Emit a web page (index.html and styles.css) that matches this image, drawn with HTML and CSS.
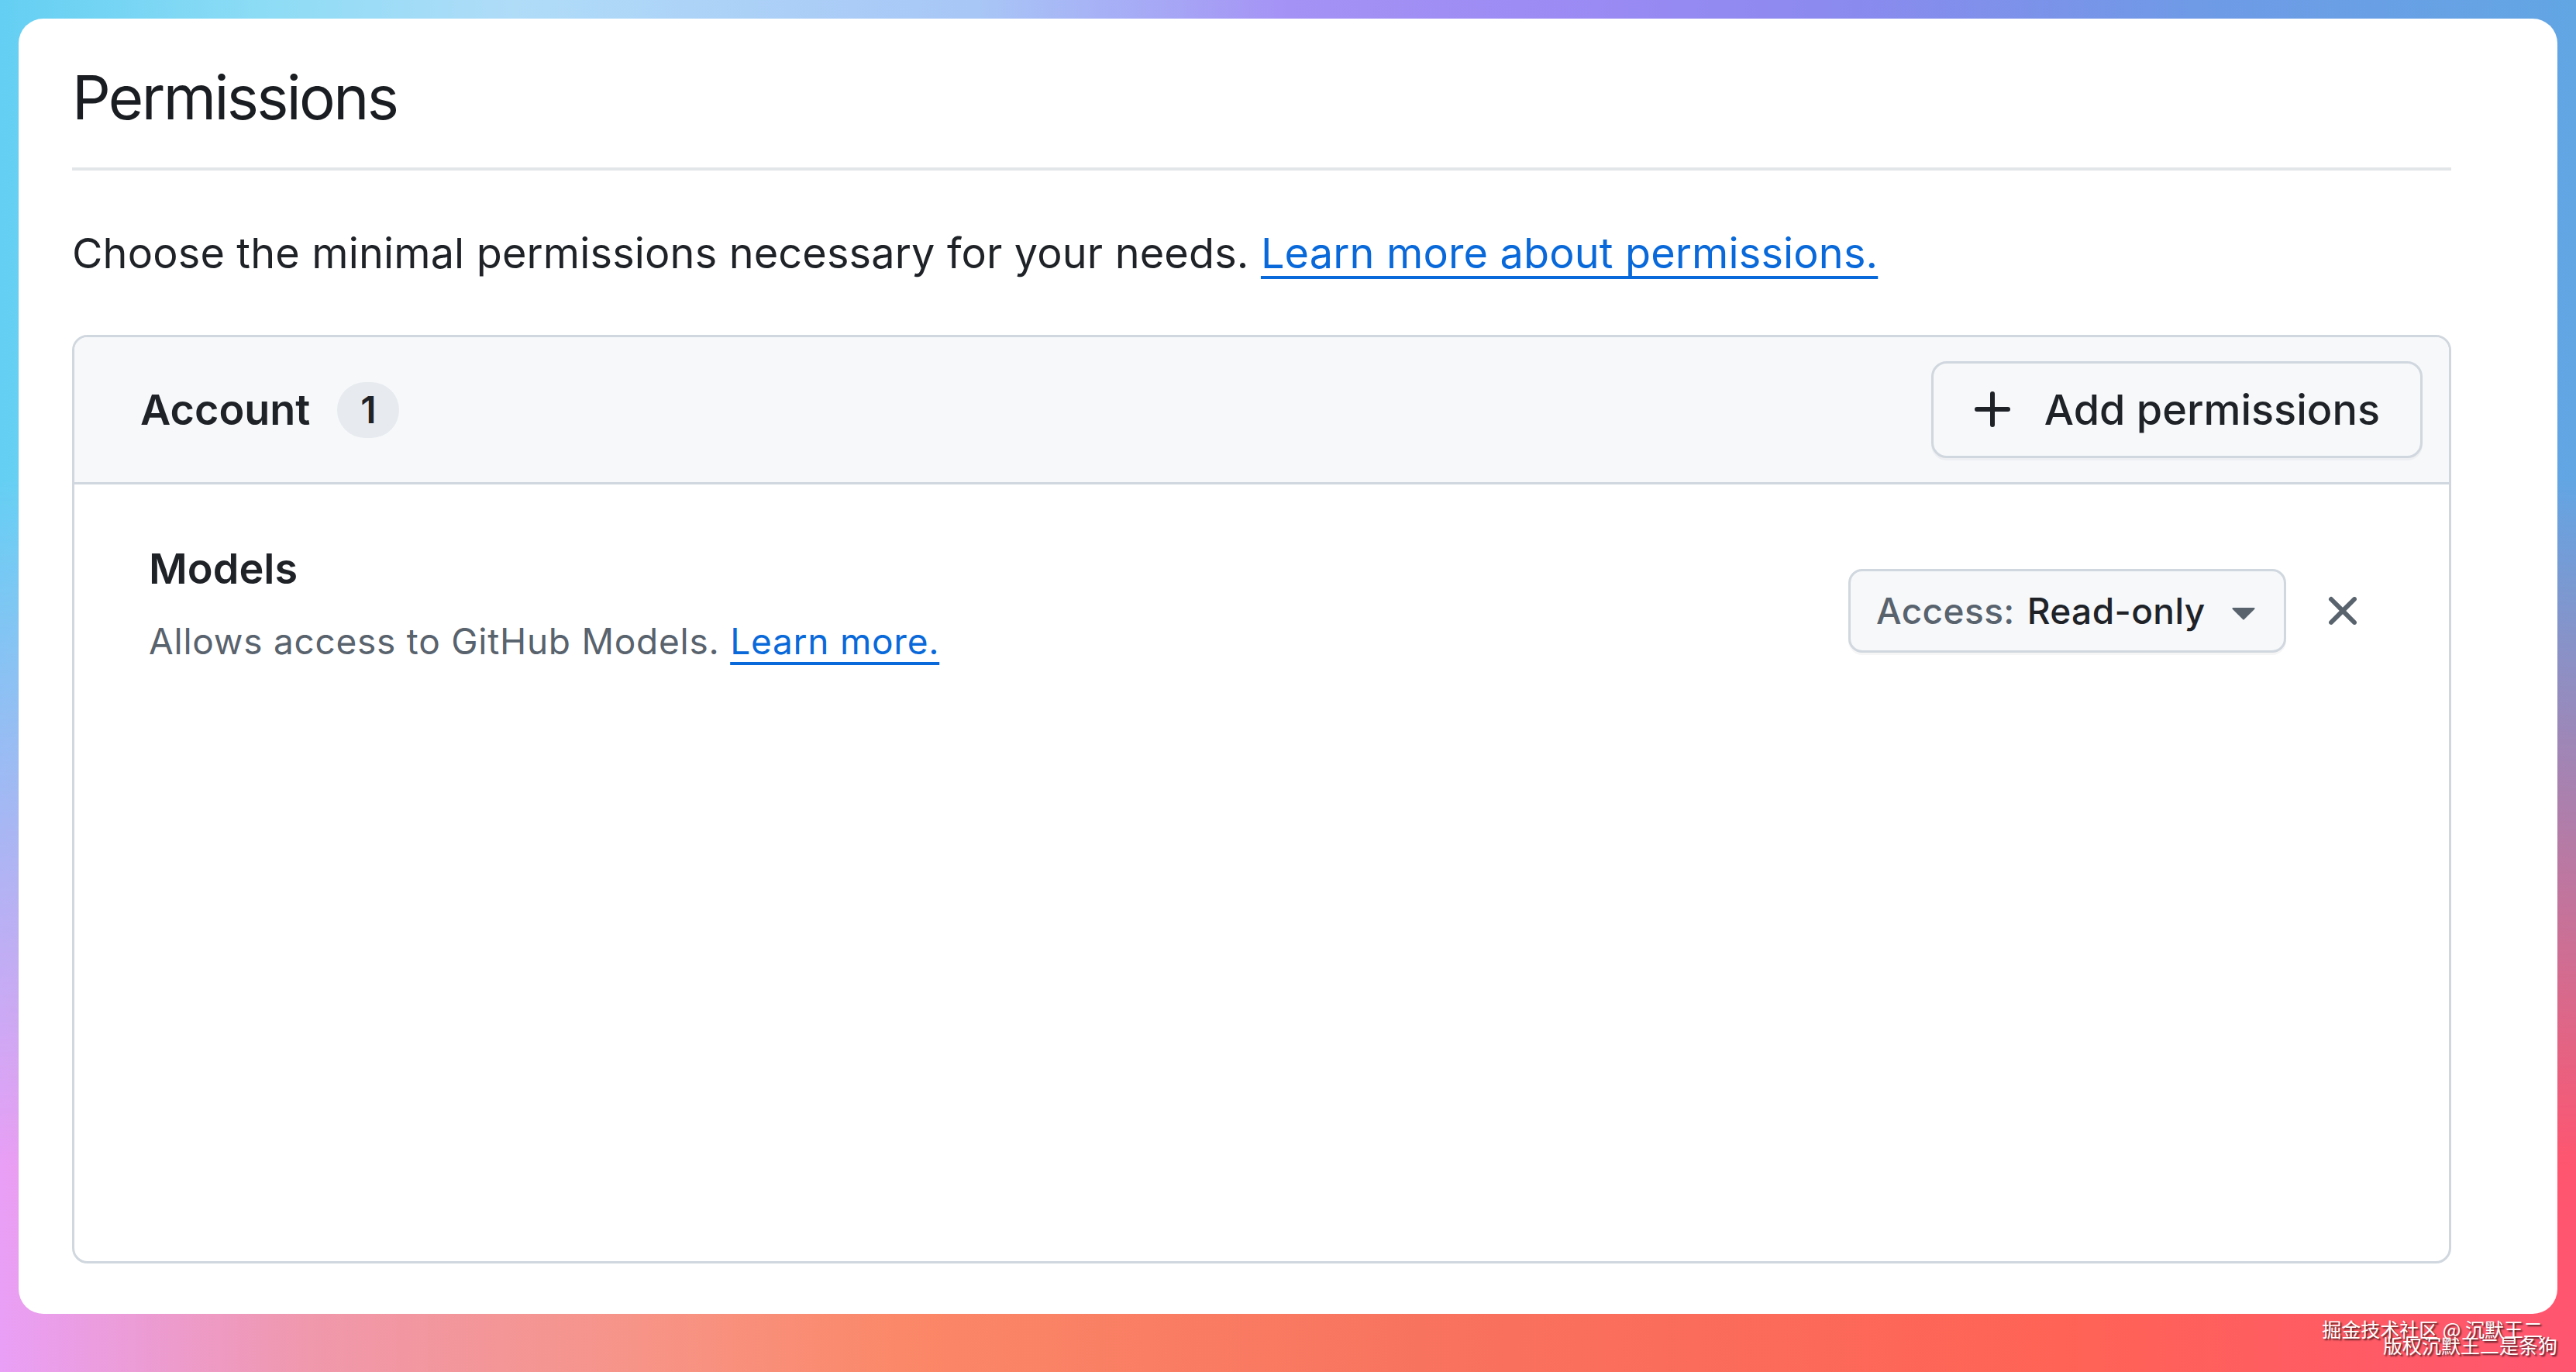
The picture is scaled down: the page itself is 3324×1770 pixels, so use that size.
FILE: index.html
```html
<!DOCTYPE html>
<html lang="en">
<head>
<meta charset="utf-8">
<title>Permissions</title>
<link rel="stylesheet" href="styles.css">
</head>
<body>
<main class="card">
  <h2 class="title">Permissions</h2>
  <p class="lead">Choose the minimal permissions necessary for your needs. <a class="link" href="#">Learn more about permissions.</a></p>

  <section class="box">
    <header class="box-header">
      <div class="box-title">
        <span>Account</span>
        <span class="counter">1</span>
      </div>
      <button class="btn" type="button">
        <svg class="btn-icon" viewBox="0 0 16 16" aria-hidden="true"><path d="M7.75 2a.75.75 0 0 1 .75.75V7h4.25a.75.75 0 0 1 0 1.5H8.5v4.25a.75.75 0 0 1-1.5 0V8.5H2.75a.75.75 0 0 1 0-1.5H7V2.75A.75.75 0 0 1 7.75 2Z"/></svg>
        <span>Add permissions</span>
      </button>
    </header>

    <div class="box-row">
      <div class="perm">
        <div class="perm-name">Models</div>
        <div class="perm-desc">Allows access to GitHub Models. <a class="link" href="#">Learn more.</a></div>
      </div>
      <div class="perm-actions">
        <button class="select" type="button">
          <span class="select-label">Access:</span>
          <span class="select-value">Read-only</span>
          <svg class="select-caret" viewBox="0 0 16 16" aria-hidden="true"><path d="m4.427 7.427 3.396 3.396a.25.25 0 0 0 .354 0l3.396-3.396A.25.25 0 0 0 11.396 7H4.604a.25.25 0 0 0-.177.427Z"/></svg>
        </button>
        <button class="remove" type="button" aria-label="Remove">
          <svg viewBox="0 0 16 16" aria-hidden="true"><path d="M3.72 3.72a.75.75 0 0 1 1.06 0L8 6.94l3.22-3.22a.749.749 0 0 1 1.275.326.749.749 0 0 1-.215.734L9.06 8l3.22 3.22a.749.749 0 0 1-.326 1.275.749.749 0 0 1-.734-.215L8 9.06l-3.22 3.22a.751.751 0 0 1-1.042-.018.751.751 0 0 1-.018-1.042L6.94 8 3.72 4.78a.75.75 0 0 1 0-1.06Z"/></svg>
        </button>
      </div>
    </div>
  </section>
</main>

<div class="watermark">
  <div class="wm-line wm-first">掘金技术社区 @ 沉默王二</div>
  <div class="wm-line">版权沉默王二是条狗</div>
</div>
</body>
</html>
```

FILE: styles.css
```css
* { box-sizing: border-box; }

html, body { height: 100%; }

body {
  margin: 0;
  padding: 24px 24px 75px 24px;
  position: relative;
  isolation: isolate;
  display: flex;
  flex-direction: column;
  font-family: Inter, "Noto Sans", sans-serif;
  color: #1f2328;
  background: linear-gradient(90deg, #e99ff6 0%, #f098ac 12%, #f79487 25%, #fb8868 35%, #f8735e 55%, #ff6355 80%, #ff5570 100%);
  overflow: hidden;
}

/* upper half of the backdrop: cyan to violet, fading down into the warm band */
body::before {
  content: "";
  position: absolute;
  inset: 0;
  z-index: -1;
  background: linear-gradient(90deg, #64cff3 0%, #8cdcf5 10%, #b0dcf8 20%, #a8c6f6 38%, #a592f5 50%, #9a8af3 62%, #8a8aee 72%, #6f9ae6 85%, #62a6e4 100%);
  -webkit-mask-image: linear-gradient(180deg, #000 0%, #000 35%, rgba(0,0,0,.6) 55%, transparent 85%);
  mask-image: linear-gradient(180deg, #000 0%, #000 35%, rgba(0,0,0,.6) 55%, transparent 85%);
}

.card {
  flex: 1;
  display: flex;
  flex-direction: column;
  background: #fff;
  border-radius: 32px;
  padding: 63px 137px 65px 69px;
}

.title {
  margin: 0;
  font-size: 78px;
  line-height: 78px;
  font-weight: 400;
  letter-spacing: -2.6px;
  color: #1a1d21;
  padding-bottom: 51px;
  border-bottom: 4px solid #e3e6e8;
}

.lead {
  margin: 66px 0 65px;
  font-size: 54px;
  line-height: 81px;
  letter-spacing: 0.15px;
}

.link {
  color: #0969da;
  text-decoration: underline;
  text-decoration-thickness: 4px;
  text-underline-offset: 10px;
  text-decoration-skip-ink: none;
}

.box {
  flex: 1;
  border: 3px solid #d0d7de;
  border-radius: 20px;
  overflow: hidden;
}

.box-header {
  display: flex;
  align-items: center;
  justify-content: space-between;
  background: #f6f8fa;
  border-bottom: 3px solid #d0d7de;
  padding: 31px 34px 31px 85px;
}

.box-title {
  display: flex;
  align-items: center;
  gap: 35px;
  font-size: 54px;
  font-weight: 600;
}

.counter {
  display: inline-flex;
  align-items: center;
  justify-content: center;
  width: 80px;
  height: 72px;
  border-radius: 36px;
  background: #e7eaee;
  font-size: 48px;
  font-weight: 600;
}

.btn {
  display: flex;
  align-items: center;
  gap: 44px;
  height: 125px;
  padding: 0 52px 0 45px;
  font-family: inherit;
  font-size: 54px;
  font-weight: 500;
  color: #1f2328;
  background: #f6f8fa;
  border: 3px solid #d0d7de;
  border-radius: 20px;
  box-shadow: 0 3px 0 rgba(31,35,40,.04);
}

.btn-icon {
  width: 64px;
  height: 64px;
  fill: #1f2328;
  margin-right: -10px;
}

.box-row {
  display: flex;
  justify-content: space-between;
  align-items: flex-start;
  padding: 68px 105px 0 96px;
}

.perm-name {
  font-size: 54px;
  line-height: 81px;
  font-weight: 600;
}

.perm-desc {
  margin-top: 19px;
  font-size: 46px;
  line-height: 69px;
  letter-spacing: 0.75px;
  color: #59636e;
}

.perm-actions {
  display: flex;
  align-items: center;
  gap: 41px;
  margin-top: 41px;
}

.select {
  display: flex;
  align-items: center;
  width: 565px;
  height: 108px;
  padding: 0 20px 0 33px;
  font-family: inherit;
  font-size: 46px;
  letter-spacing: 0.4px;
  background: #f6f8fa;
  border: 3px solid #d0d7de;
  border-radius: 18px;
  box-shadow: 0 3px 0 rgba(31,35,40,.04);
}

.select-label {
  color: #59636e;
  font-weight: 500;
  margin-right: 16px;
}

.select-value {
  color: #1f2328;
  font-weight: 500;
}

.select-caret {
  width: 64px;
  height: 64px;
  fill: #59636e;
  margin-left: auto;
}

.remove {
  display: flex;
  padding: 0;
  background: none;
  border: 0;
}

.remove svg {
  width: 64px;
  height: 64px;
  fill: #59636e;
}

.watermark {
  position: absolute;
  right: 24px;
  bottom: 22px;
  text-align: right;
  font-family: "Noto Sans CJK SC", sans-serif;
  font-size: 25px;
  line-height: 25px;
  color: #fff;
  text-shadow: 2px 2px 2px rgba(0,0,0,.65);
}

.wm-line { height: 25px; overflow: visible; }

.wm-first { margin-right: 19px; margin-bottom: -4px; }
```
